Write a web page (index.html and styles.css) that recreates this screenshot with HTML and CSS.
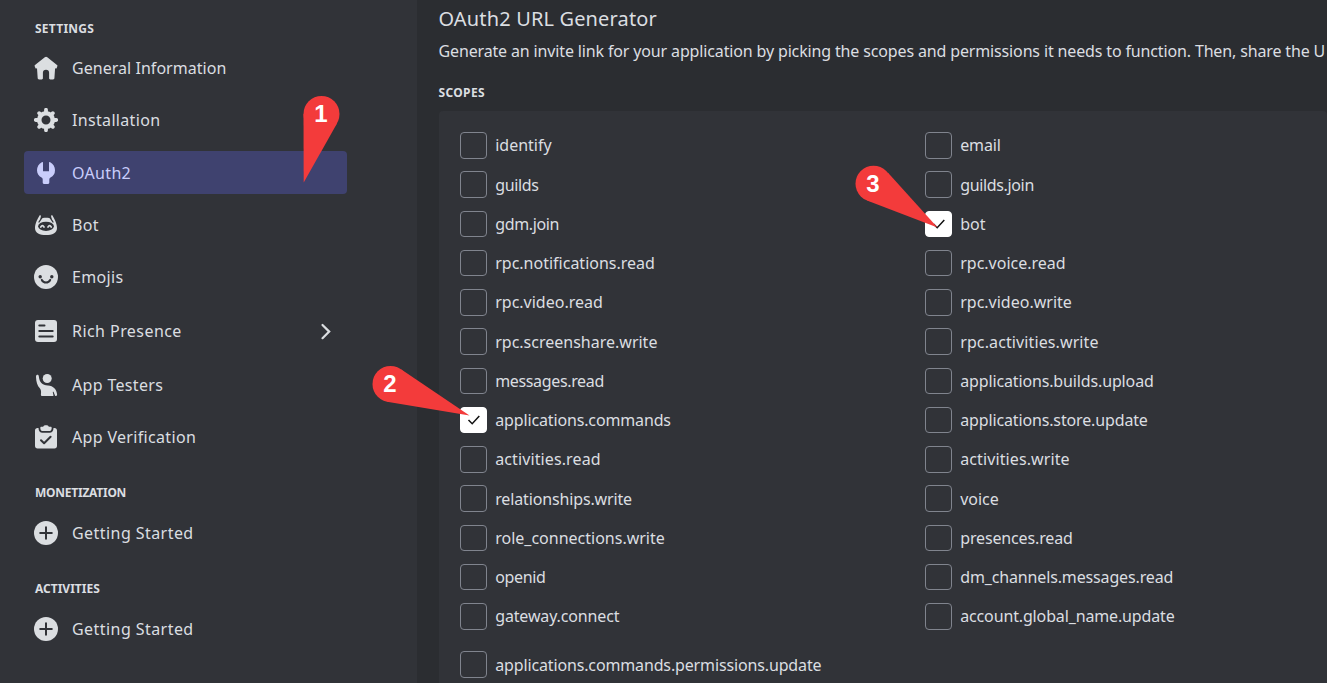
FILE: index.html
```html
<!DOCTYPE html>
<html lang="en">
<head>
<meta charset="utf-8">
<title>OAuth2 URL Generator</title>
<link rel="stylesheet" href="styles.css">
</head>
<body>
<div class="app">
  <aside class="sidebar">
    <h3 class="nav-heading first">SETTINGS</h3>
    <nav class="nav">
      <a class="nav-item tight"><svg class="icon" viewBox="0 0 24 24"><path fill-rule="evenodd" d="M10.8 1.2a2 2 0 0 1 2.500 0l9.700 7.700c.4.300.6.800.4 1.200l-.7 1.900c-.1.500-.7.700-1.100.5l-.5-.2-.7 9.900c-.1.700-.6 1.200-1.300 1.200h-2.800c-.7 0-1.200-.5-1.200-1.200v-5.400a3.100 3.100 0 0 0-6.200 0v5.400c0 .7-.5 1.200-1.200 1.200H5c-.7 0-1.200-.5-1.300-1.200L3 12.300l-.5.2c-.5.2-1-.1-1.100-.5l-.8-1.900c-.1-.4 0-.9.400-1.200z"/></svg><span>General Information</span></a>
      <a class="nav-item"><svg class="icon" viewBox="0 0 24 24"><circle class="ring" cx="12" cy="12" r="6.800"/><path class="teeth" d="M12 5V1.800M12 19v3.200M5 12H1.800M19 12h3.200M7 7 5.200 5.200M17 17l1.800 1.800M7 17l-1.800 1.800M17 7l1.800-1.800"/></svg><span>Installation</span></a>
      <a class="nav-item selected"><svg class="icon" viewBox="0 0 24 24"><path d="M9 1.800c0-.8-.5-1-1.200-.6A9.500 9.500 0 0 0 3 9.300c0 3.200 1.700 5.800 4.500 7.300.7.400 1.200 1 1.200 1.800v3.200c0 .8.500 1.300 1.200 1.300h4.200c.7 0 1.200-.5 1.200-1.300v-3.200c0-.8.500-1.400 1.200-1.800A8.200 8.200 0 0 0 21 9.300c0-3.400-1.800-6.500-4.800-8.100-.7-.4-1.200-.2-1.200.6v8.400H9z"/></svg><span>OAuth2</span></a>
      <a class="nav-item"><svg class="icon" viewBox="0 0 24 24"><path d="M5.500 2.600c.4-.7 1.600-.3 1.400.6L6.300 6C7.900 5.100 9.800 4.700 12 4.700s4.100.4 5.700 1.300l-.6-2.800c-.2-.9 1-1.300 1.400-.6C20.100 5.300 23 10.600 23 14.900c0 5.200-4.700 7.100-11 7.100S1 20.100 1 14.900c0-4.300 2.900-9.600 4.500-12.300Z"/><path class="cut" d="M7.600 5.200 5 9M16.400 5.200 19 9"/><ellipse class="hole" cx="12" cy="13.300" rx="7.900" ry="4.600"/><path class="stroke" d="M6.800 14q1.600-2.600 3.200 0M14 14q1.600-2.600 3.200 0"/></svg><span>Bot</span></a>
      <a class="nav-item"><svg class="icon" viewBox="0 0 24 24"><circle cx="12" cy="12" r="12"/><circle class="hole" cx="6.200" cy="11.700" r="1.700"/><circle class="hole" cx="17.800" cy="11.700" r="1.700"/><path class="cut wide" d="M7.800 14.900c1.900 3.500 6.500 3.500 8.400 0"/></svg><span>Emojis</span></a>
      <a class="nav-item tall loose"><svg class="icon" viewBox="0 0 24 24"><rect x="1" y="1" width="22" height="22" rx="3"/><path class="cut wide" d="M5.300 6.500h5.200M5.300 12h13.400M5.300 17.500h13.400"/></svg><span>Rich Presence</span><svg class="chevron" viewBox="0 0 12 20"><path d="m2.500 4 6.700 6.600-6.700 6.600"/></svg></a>
      <a class="nav-item"><svg class="icon" viewBox="0 0 24 24"><circle cx="13.200" cy="5.500" r="4.500"/><path d="M4.800 3.200C4.600 1.900 3.900 1.600 3.200 1.700 2.300 1.800 2 2.600 2 4c.2 5.200 1.200 8.500 4 11.500 1.200 1.400 1.200 3.600.9 6-.1.900.3 1.500 1.200 1.500h10.700c.6 0 .7-.3.600-1l-.6-2.700c-.1-.5.700-.6.900-.1l1.300 3.300c.2.400.5.500 1 .5.800 0 1.200-.5 1.100-1.400-.4-5.200-3.700-8.800-9.200-9.100-5.800-.2-8.500-3.300-9.100-9.300Z"/></svg><span>App Testers</span></a>
      <a class="nav-item"><svg class="icon" viewBox="0 0 24 24"><path d="M1 5.500C1 4 2 3 3.500 3h1C4.500 6 6 7.800 8.500 7.800h7c2.500 0 4-1.800 4-4.800h1C22 3 23 4 23 5.500v15.300c0 1.700-1 2.700-2.500 2.700h-17C2 23.500 1 22.500 1 20.800z"/><path d="M9.200 1.700C9.800-.2 14.200-.2 14.800 1.700h1.700c.8 0 1.200.5 1.200 1.200 0 2-.9 3.100-2.700 3.100H9c-1.800 0-2.700-1.100-2.700-3.100 0-.7.400-1.200 1.200-1.200z"/><path class="cut wide" d="m7 15.200 3.100 3.100 6.500-6.500"/></svg><span>App Verification</span></a>
    </nav>
    <h3 class="nav-heading later monetization">MONETIZATION</h3>
    <nav class="nav">
      <a class="nav-item loose"><svg class="icon" viewBox="0 0 24 24"><circle cx="12" cy="12" r="12"/><path class="cut wide" d="M12 6.200v11.600M6.200 12h11.600"/></svg><span>Getting Started</span></a>
    </nav>
    <h3 class="nav-heading later">ACTIVITIES</h3>
    <nav class="nav">
      <a class="nav-item loose"><svg class="icon" viewBox="0 0 24 24"><circle cx="12" cy="12" r="12"/><path class="cut wide" d="M12 6.200v11.600M6.200 12h11.600"/></svg><span>Getting Started</span></a>
    </nav>
  </aside>
  <main class="main">
    <h1 class="title">OAuth2 URL Generator</h1>
    <p class="intro">Generate an invite link for your application by picking the scopes and permissions it needs to function. Then, share the U</p>
    <h2 class="label">SCOPES</h2>
    <section class="scopes">
      <label class="scope"><i class="box"></i><span>identify</span></label>
      <label class="scope snug"><i class="box"></i><span>email</span></label>
      <label class="scope narrow"><i class="box"></i><span>guilds</span></label>
      <label class="scope narrow"><i class="box"></i><span>guilds.join</span></label>
      <label class="scope narrow"><i class="box"></i><span>gdm.join</span></label>
      <label class="scope"><i class="box checked"><svg viewBox="0 0 14 12"><path d="m1.500 6 3.700 3.700L12.300 2"/></svg></i><span>bot</span></label>
      <label class="scope"><i class="box"></i><span>rpc.notifications.read</span></label>
      <label class="scope"><i class="box"></i><span>rpc.voice.read</span></label>
      <label class="scope"><i class="box"></i><span>rpc.video.read</span></label>
      <label class="scope"><i class="box"></i><span>rpc.video.write</span></label>
      <label class="scope"><i class="box"></i><span>rpc.screenshare.write</span></label>
      <label class="scope wide"><i class="box"></i><span>rpc.activities.write</span></label>
      <label class="scope narrow"><i class="box"></i><span>messages.read</span></label>
      <label class="scope snug"><i class="box"></i><span>applications.builds.upload</span></label>
      <label class="scope snug"><i class="box checked"><svg viewBox="0 0 14 12"><path d="m1.500 6 3.700 3.700L12.300 2"/></svg></i><span>applications.commands</span></label>
      <label class="scope snug"><i class="box"></i><span>applications.store.update</span></label>
      <label class="scope wide"><i class="box"></i><span>activities.read</span></label>
      <label class="scope wide"><i class="box"></i><span>activities.write</span></label>
      <label class="scope snug"><i class="box"></i><span>relationships.write</span></label>
      <label class="scope"><i class="box"></i><span>voice</span></label>
      <label class="scope"><i class="box"></i><span>role_connections.write</span></label>
      <label class="scope snug"><i class="box"></i><span>presences.read</span></label>
      <label class="scope narrow"><i class="box"></i><span>openid</span></label>
      <label class="scope snug"><i class="box"></i><span>dm_channels.messages.read</span></label>
      <label class="scope snug"><i class="box"></i><span>gateway.connect</span></label>
      <label class="scope snug"><i class="box"></i><span>account.global_name.update</span></label>
      <label class="scope snug last"><i class="box"></i><span>applications.commands.permissions.update</span></label>
    </section>
  </main>
  <svg class="markers" viewBox="0 0 1327 683">
    <circle cx="321.500" cy="114" r="18"/><path d="M303.500 114 303.700 182.500 337 123.500z"/>
    <circle cx="390.500" cy="384" r="18"/><path d="M401 369.300 469.500 415.500 387 401.700z"/>
    <circle cx="873.500" cy="183.700" r="18"/><path d="M887.800 172.500 937.500 227.500 867 200.500z"/>
    <text x="321" y="122">1</text>
    <text x="390" y="392">2</text>
    <text x="873" y="192">3</text>
  </svg>
</div>
</body>
</html>
```
FILE: styles.css
```css
* { box-sizing: border-box; }

body {
  margin: 0;
  background: #2b2d31;
  color: #dbdee1;
  font-family: "Noto Sans", "Open Sans", sans-serif;
  font-size: 16px;
}

h1, h2, h3, p { margin: 0; }

.app {
  position: relative;
  display: grid;
  grid-template-columns: 417px 1fr;
  width: 1327px;
  height: 683px;
  overflow: hidden;
}

.sidebar {
  padding: 21px 70px 0 24px;
  background: #313338;
}

.nav-heading, .label {
  font-size: 12px;
  font-weight: 700;
  line-height: 16px;
}

.nav-heading {
  height: 26.500px;
  padding-left: 11px;
}

.nav-heading.first {
  height: 25.500px;
  letter-spacing: 0.250px;
}

.nav-heading.later { margin-top: 26.500px; }
.nav-heading.monetization { letter-spacing: -0.250px; }

.nav {
  display: flex;
  flex-direction: column;
  gap: 9.250px;
}

.nav-item {
  display: flex;
  align-items: center;
  height: 43px;
  padding: 0 15px 0 10px;
  gap: 14px;
  border-radius: 4px;
  letter-spacing: 0.330px;
  white-space: nowrap;
}

.nav-item.tall { height: 46px; }
.nav-item.tight { letter-spacing: 0.040px; }
.nav-item.loose { letter-spacing: 0.440px; }

.nav-item.selected {
  background: #3f426f;
  color: #c9cdfb;
}

.icon {
  width: 24px;
  height: 24px;
  fill: currentColor;
}

.icon .cut, .icon .stroke {
  fill: none;
  stroke: #313338;
  stroke-width: 1.300;
  stroke-linecap: round;
  stroke-linejoin: round;
}

.icon .stroke {
  stroke: currentColor;
  stroke-width: 1.700;
}

.icon .wide { stroke-width: 2; }
.icon .hole { fill: #313338; }

.icon .ring, .icon .teeth {
  fill: none;
  stroke: currentColor;
  stroke-width: 4.600;
}

.icon .teeth {
  stroke-width: 3.800;
  stroke-linecap: round;
}

.chevron {
  width: 12px;
  height: 20px;
  margin-left: auto;
  fill: none;
  stroke: currentColor;
  stroke-width: 2.200;
  stroke-linecap: round;
}

.main {
  min-width: 0;
  padding: 4px 0 0 21.500px;
  overflow: hidden;
}

.title {
  font-size: 20px;
  font-weight: 450;
  line-height: 30px;
  letter-spacing: 0.150px;
}

.intro {
  margin-top: 5px;
  line-height: 24px;
  letter-spacing: -0.145px;
  white-space: nowrap;
}

.label {
  margin-top: 22px;
  letter-spacing: 0.350px;
}

.scopes {
  display: grid;
  grid-template-columns: 465px 1fr;
  grid-auto-rows: 26.250px;
  row-gap: 13px;
  height: 590px;
  margin-top: 10px;
  padding: 21.200px 0 0 21.500px;
  border-radius: 4px;
  background: #313338;
}

.scope {
  display: flex;
  align-items: center;
  gap: 8.200px;
  white-space: nowrap;
}

.scope.snug { letter-spacing: -0.140px; }
.scope.narrow { letter-spacing: -0.350px; }
.scope.wide { letter-spacing: 0.110px; }
.scope.last { margin: 9px 0 -9px; }

.box {
  display: flex;
  align-items: center;
  justify-content: center;
  width: 27px;
  height: 26.500px;
  border: 1px solid #80848e;
  border-radius: 4px;
}

.box.checked {
  border-color: #fff;
  background: #fff;
}

.box svg {
  width: 14px;
  height: 12px;
  fill: none;
  stroke: #111;
  stroke-width: 1.500;
}

.markers {
  position: absolute;
  inset: 0;
  width: 1327px;
  height: 683px;
  fill: #f33b3b;
}

.markers text {
  fill: #fff;
  font: 700 24px "Liberation Sans", sans-serif;
  text-anchor: middle;
}
```
